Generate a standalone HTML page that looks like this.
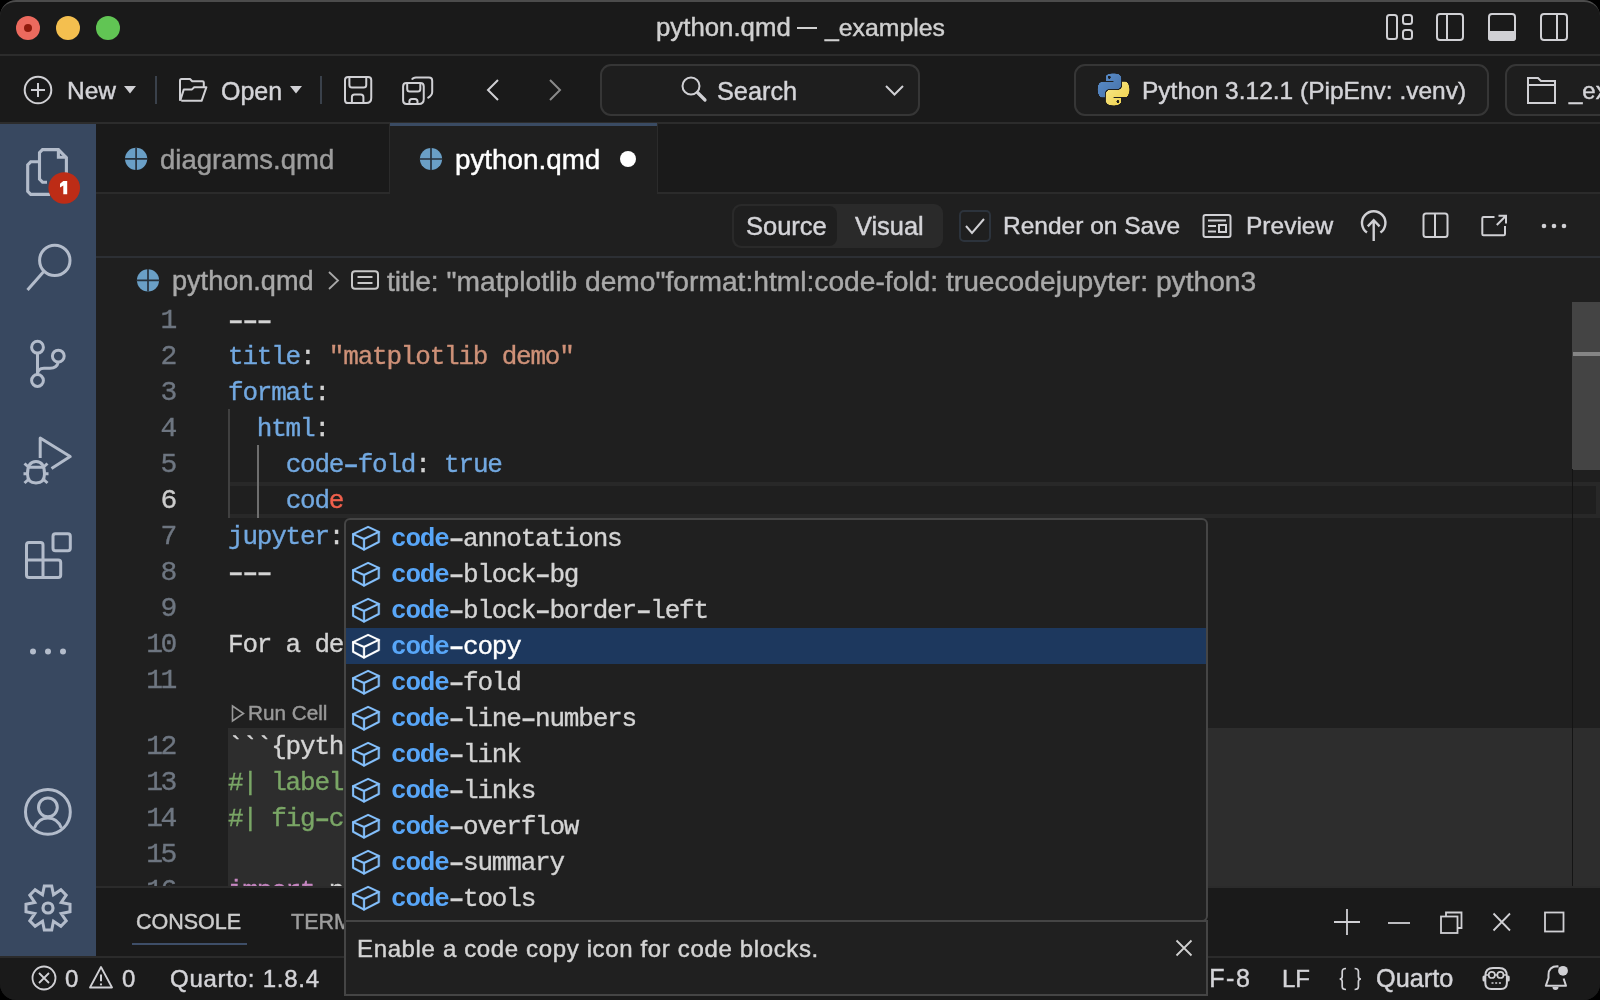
<!DOCTYPE html>
<html><head><meta charset="utf-8">
<style>
*{box-sizing:border-box;margin:0;padding:0}
html,body{width:1600px;height:1000px;overflow:hidden;background:#000}
body{font-family:"Liberation Sans",sans-serif;color:#cccccc;position:relative}
.t{-webkit-text-stroke:0.45px currentColor}
.code,.ln,.sg{-webkit-text-stroke:0.35px currentColor}
.win{position:absolute;left:0;top:0;width:1600px;height:1000px;background:#1a1a1a;border-radius:16px;overflow:hidden}
.a{position:absolute}
.t{position:absolute;white-space:pre;line-height:1}
.win *{will-change:transform}
.mono{font-family:"Liberation Mono",monospace}
svg{position:absolute;overflow:visible}
.ic{fill:none;stroke:#d0d0d4;stroke-width:2}
.ab{fill:none;stroke:#b3bccb;stroke-width:3}
.code{position:absolute;left:228px;font-family:"Liberation Mono",monospace;font-size:26px;letter-spacing:-1.2px;line-height:40px;height:36px;white-space:pre;color:#d4d4d4}
.ln{position:absolute;left:120px;width:55px;text-align:right;font-family:"Liberation Mono",monospace;font-size:28px;letter-spacing:-2.4px;line-height:40px;height:36px;white-space:pre;color:#6e7681}
.k{color:#72a8e0}.s{color:#ce9178}.cm{color:#7aa666}.p{color:#c586c0}.er{color:#f0604c}
.sg{position:absolute;left:391px;font-family:"Liberation Mono",monospace;font-size:26px;letter-spacing:-1.2px;line-height:38px;height:36px;white-space:pre;color:#d4d4d4}
.sg b{color:#58a6f8;font-weight:bold;-webkit-text-stroke:0}
em.d{font-style:normal;font-weight:bold}
</style></head>
<body>
<div class="win">
  <!-- ============ title bar ============ -->
  <div class="a" style="left:0;top:0;width:1600px;height:54px;background:#1a1a1a"></div>
  <div class="a" style="left:0;top:54px;width:1600px;height:2px;background:#2c2c2c"></div>
  <div class="a" style="left:0;top:0;width:1600px;height:1000px;border-radius:16px;border:0;border-top:2px solid #4c4c4c;z-index:50;pointer-events:none"></div>
  <div class="a" style="left:16px;top:16px;width:24px;height:24px;border-radius:50%;background:#ec6a5e"></div>
  <div class="a" style="left:24px;top:24px;width:8px;height:8px;border-radius:50%;background:#8f1a0c"></div>
  <div class="a" style="left:56px;top:16px;width:24px;height:24px;border-radius:50%;background:#f4bf4f"></div>
  <div class="a" style="left:96px;top:16px;width:24px;height:24px;border-radius:50%;background:#61c554"></div>
  <div class="t" style="left:655.5px;top:15px;font-size:25.8px;color:#d0d0d0">python.qmd</div>
  <div class="a" style="left:797px;top:27px;width:20px;height:2px;background:#d0d0d0"></div>
  <div class="t" style="left:824.5px;top:15.5px;font-size:24.8px;color:#d0d0d0">_examples</div>
  <!-- layout icons -->
  <svg style="left:0;top:0" width="1600" height="56">
    <g class="ic" stroke-width="2.2">
      <rect x="1387" y="15" width="10" height="24" rx="2.5"/>
      <rect x="1403" y="15" width="9" height="9" rx="2.5"/>
      <rect x="1403" y="30" width="9" height="9" rx="2.5"/>
      <rect x="1437" y="14" width="26" height="26" rx="3"/>
      <line x1="1447" y1="14" x2="1447" y2="40"/>
      <rect x="1489" y="14" width="26" height="26" rx="3"/>
      <rect x="1541" y="14" width="26" height="26" rx="3"/>
      <line x1="1557" y1="14" x2="1557" y2="40"/>
    </g>
    <path d="M1488 31 H1516 V38 Q1516 41 1513 41 H1491 Q1488 41 1488 38 Z" fill="#d0d0d4"/>
  </svg>

  <!-- ============ toolbar ============ -->
  <div class="a" style="left:0;top:122px;width:1600px;height:2px;background:#2c2c2c"></div>
  <div class="t" style="left:67px;top:79px;font-size:24.5px;color:#d4d4d8">New</div>
  <div class="t" style="left:221px;top:79px;font-size:25px;color:#d4d4d8">Open</div>
  <div class="a" style="left:155px;top:76px;width:2px;height:28px;background:#3a414b"></div>
  <div class="a" style="left:320px;top:76px;width:2px;height:28px;background:#3a414b"></div>
  <div class="a" style="left:600px;top:64px;width:320px;height:52px;border:2px solid #363636;border-radius:11px;background:#1e1e1e"></div>
  <div class="t" style="left:717px;top:78.5px;font-size:25.3px;color:#d4d4d8">Search</div>
  <div class="a" style="left:1074px;top:64px;width:415px;height:52px;border:2px solid #363636;border-radius:11px;background:#1e1e1e"></div>
  <div class="t" style="left:1142px;top:79px;font-size:24.5px;color:#d4d4d8">Python 3.12.1 (PipEnv: .venv)</div>
  <div class="a" style="left:1505px;top:64px;width:140px;height:52px;border:2px solid #363636;border-radius:11px;background:#1e1e1e"></div>
  <div class="t" style="left:1569px;top:79px;font-size:24px;color:#d4d4d8">_examples</div>

  <svg style="left:0;top:56px" width="1600" height="66">
    <g class="ic">
      <circle cx="38" cy="34" r="13.3"/>
      <line x1="38" y1="27" x2="38" y2="41"/><line x1="31" y1="34" x2="45" y2="34"/>
      <!-- folder open -->
      <path d="M180 44.8 V24.5 Q180 23 181.5 23 H190 L192.2 25.2 H202.4 Q203.8 25.2 203.8 26.6 V31.2" stroke-linejoin="round"/>
      <path d="M180.3 44.5 L183.8 33.4 H192 L194.2 31.2 H206.4 L201.6 44.8 H181.3" stroke-linejoin="round"/>
      <!-- save -->
      <path d="M348.2 20.9 H368.1 Q371.25 20.9 371.25 24 V42.1 Q371.25 47.1 366.25 47.1 H348.2 Q345 47.1 345 43.9 V24 Q345 20.9 348.2 20.9 Z"/>
      <path d="M349.4 20.9 V29 Q349.4 31.5 352 31.5 H363.6 Q366.25 31.5 366.25 29 V20.9"/>
      <path d="M351.9 47.1 V41 Q351.9 38.4 354.5 38.4 H360.8 Q363.4 38.4 363.4 41 V47.1"/>
      <!-- save all -->
      <path d="M411.9 23.6 Q413 21.5 416 21.5 H429 Q432.2 21.5 432.2 24.7 V36 Q432.2 39.5 427.5 42.1"/>
      <path d="M406.5 27.1 H420.3 Q423.75 27.1 423.75 30.5 V43 Q423.75 48 418.75 48 H406.5 Q403.1 48 403.1 44.6 V30.5 Q403.1 27.1 406.5 27.1 Z"/>
      <path d="M407.2 27.1 V33.1 Q407.2 35.6 409.7 35.6 H417.8 Q420.3 35.6 420.3 33.1 V27.1"/>
      <path d="M409.4 48 V45.5 Q409.4 43 411.9 43 H415 Q417.5 43 417.5 45.5 V48"/>
      <!-- nav arrows -->
      <path d="M498 24 L488 34 L498 44"/>
      <path d="M550 24 L560 34 L550 44" stroke="#8a8a8a"/>
      <!-- search magnifier -->
      <circle cx="691" cy="30" r="8.5"/>
      <line x1="697.5" y1="36.5" x2="705" y2="44" stroke-width="3.2" stroke-linecap="round"/>
      <!-- chevron -->
      <path d="M886 30 L894.5 38.5 L903 30"/>
      <!-- folder -->
      <path d="M1528 47 V22 H1538 L1541 25 H1555 V47 Z"/>
      <line x1="1528" y1="29" x2="1555" y2="29"/>
    </g>
    <path d="M124 30 H136 L130 37.5 Z M290 30 H302 L296 37.5 Z" fill="#d0d0d4"/>
    <defs><linearGradient id="pyb" x1="0" y1="0" x2="1" y2="1"><stop offset="0" stop-color="#5c8fcc"/><stop offset="1" stop-color="#4571a8"/></linearGradient><linearGradient id="pyy" x1="0" y1="0" x2="1" y2="1"><stop offset="0" stop-color="#f8e98f"/><stop offset="1" stop-color="#efcf45"/></linearGradient></defs>
    <g transform="translate(1097.5,17.5) scale(0.29)">
      <path fill="url(#pyb)" d="M54.9,0.1c-4.6,0-9,0.4-12.8,1.1C30.8,3.2,28.8,7.3,28.8,15v10.1h26.3v3.4H28.8H19c-7.6,0-14.3,4.6-16.4,13.3c-2.4,10-2.5,16.2,0,26.7c1.9,7.8,6.3,13.3,13.9,13.3h9v-12c0-8.7,7.5-16.3,16.4-16.3h26.2c7.3,0,13.1-6,13.1-13.3V15c0-7.1-6-12.4-13.1-13.7C63.5,0.4,59,0.1,54.9,0.1z M40.7,8.2c2.7,0,4.9,2.2,4.9,5c0,2.7-2.2,4.9-4.9,4.9c-2.7,0-4.9-2.2-4.9-4.9C35.8,10.4,38,8.2,40.7,8.2z"/>
      <path fill="url(#pyy)" d="M85,28.5v11.7c0,9-7.7,16.6-16.4,16.6H42.4c-7.2,0-13.1,6.1-13.1,13.3v25c0,7.1,6.2,11.3,13.1,13.3c8.3,2.4,16.3,2.9,26.2,0c6.6-1.9,13.1-5.8,13.1-13.3V85.1H55.4v-3.3h26.2h13.1c7.6,0,10.5-5.3,13.1-13.3c2.7-8.2,2.6-16.1,0-26.7c-1.9-7.6-5.5-13.3-13.1-13.3H85z M70.3,91.8c2.7,0,4.9,2.2,4.9,4.9c0,2.7-2.2,5-4.9,5c-2.7,0-4.9-2.2-4.9-5C65.4,94,67.6,91.8,70.3,91.8z"/>
    </g>
  </svg>
  <!-- ============ activity bar ============ -->
  <div class="a" style="left:0;top:124px;width:96px;height:832px;background:#384860"></div>
  <svg style="left:0;top:0" width="96" height="960">
    <g class="ab">
      <!-- files -->
      <path style="stroke-width:3.1" d="M47 182.2 H42.5 L39.5 179.2 V152.6 L42.5 149.6 H58.4 L66.4 157.6 V175"/>
      <path style="stroke-width:3.1" d="M58.4 149.6 V157.3 H66.4"/>
      <path style="stroke-width:3.1" d="M39.5 161.8 H30.7 L27.7 164.8 V191.4 L30.7 194.4 H50"/>
      <!-- search -->
      <circle cx="54.8" cy="260.4" r="15.2"/>
      <line x1="44" y1="271.2" x2="27.5" y2="290"/>
      <!-- source control -->
      <circle cx="37.5" cy="347.2" r="5.9"/>
      <circle cx="37.5" cy="380.5" r="5.9"/>
      <circle cx="58.3" cy="356.1" r="5.9"/>
      <line x1="37.5" y1="353" x2="37.5" y2="374.6"/>
      <path d="M58.3 362 Q57 368.3 50 368.3 H44 Q37.5 368.3 37.5 374.6"/>
      <!-- run & debug -->
      <path d="M40.2 458 V438 L70.2 456.6 L51.5 468.4" stroke-linejoin="round"/>
      <path d="M27.5 474 Q27.5 461.5 36 461.5 Q44.5 461.5 44.5 474 Q44.5 483 36 483 Q27.5 483 27.5 474 Z"/>
      <path d="M28 467.2 H44 M23.5 473.8 H27.5 M44.5 473.8 H48.5 M24.5 463.5 L29 467.5 M47.5 463.5 L43 467.5 M24.5 483 L29 479 M47.5 483 L43 479"/>
      <!-- extensions -->
      <rect x="53" y="533.8" width="17.3" height="17" rx="2.5"/>
      <path d="M43 560 V545 Q43 542.5 40.5 542.5 H29 Q26.5 542.5 26.5 545 V575 Q26.5 577.5 29 577.5 H58.2 Q60.7 577.5 60.7 575 V562.5 Q60.7 560 58.2 560 H26.5 M43 560 V577.5"/>
      <!-- account -->
      <circle cx="47.9" cy="811.9" r="22.4"/>
      <circle cx="47.9" cy="807.3" r="9.4"/>
      <path d="M34.4 828 Q38.5 818 47.9 818 Q57.3 818 61.4 828"/>
      <!-- gear -->
      <circle cx="48" cy="908" r="5" style="stroke-width:3.2"/>
    </g>
    <path class="ab" style="stroke-width:3;stroke-linejoin:miter" d="M44.3 886.0 L51.7 886.0 L53.5 894.8 L60.9 889.8 L66.2 895.1 L61.2 902.5 L70.0 904.3 L70.0 911.7 L61.2 913.5 L66.2 920.9 L60.9 926.2 L53.5 921.2 L51.7 930.0 L44.3 930.0 L42.5 921.2 L35.1 926.2 L29.8 920.9 L34.8 913.5 L26.0 911.7 L26.0 904.3 L34.8 902.5 L29.8 895.1 L35.1 889.8 L42.5 894.8 Z"/>
    <circle cx="33" cy="651.6" r="3" fill="#b3bccb"/>
    <circle cx="48" cy="651.6" r="3" fill="#b3bccb"/>
    <circle cx="63" cy="651.6" r="3" fill="#b3bccb"/>
    <circle cx="64.2" cy="188" r="15.8" fill="#bd2c16"/>
    <path d="M63.3 181 H67.2 V194.2 H63.3 V185.6 L60 187.6 V183.8 Z" fill="#fff"/>
  </svg>
  
  <!-- ============ tab bar ============ -->
  <div class="a" style="left:96px;top:124px;width:1504px;height:68px;background:#1a1a1a"></div>
  <div class="a" style="left:96px;top:192px;width:1504px;height:2px;background:#2b2b2b"></div>
  <div class="a" style="left:389px;top:124px;width:1px;height:68px;background:#2b2b2b"></div>
  <div class="a" style="left:390px;top:124px;width:267px;height:70px;background:#1f1f1f"></div>
  <div class="a" style="left:390px;top:123px;width:267px;height:3px;background:#3a4b63"></div>
  <div class="a" style="left:657px;top:124px;width:1px;height:68px;background:#2b2b2b"></div>
  <div class="t" style="left:160px;top:146px;font-size:27.5px;color:#9d9d9d">diagrams.qmd</div>
  <div class="t" style="left:455px;top:146px;font-size:27.8px;color:#ffffff">python.qmd</div>
  <div class="a" style="left:620px;top:151px;width:16px;height:16px;border-radius:50%;background:#fff"></div>

  <!-- ============ editor ============ -->
  <div class="a" style="left:96px;top:194px;width:1504px;height:692px;background:#1f1f1f"></div>
  <div class="a" style="left:96px;top:256px;width:1504px;height:2px;background:#2c2f34"></div>
  <!-- editor actions -->
  <div class="a" style="left:732px;top:204px;width:211px;height:44px;border-radius:9px;background:#2a2a2a"></div>
  <div class="a" style="left:734px;top:206px;width:103px;height:40px;border-radius:8px;background:#1f1f1f"></div>
  <div class="t" style="left:746px;top:214px;font-size:25.5px;color:#d4d4d8">Source</div>
  <div class="t" style="left:855px;top:214px;font-size:25.4px;color:#d4d4d8">Visual</div>
  <div class="a" style="left:959px;top:210px;width:32px;height:32px;border-radius:5px;border:2px solid #2c333c;background:#1f1f1f"></div>
  <div class="t" style="left:1003px;top:214px;font-size:24.5px;color:#d4d4d8">Render on Save</div>
  <div class="t" style="left:1246px;top:214px;font-size:24.5px;color:#d4d4d8">Preview</div>
  <svg style="left:0;top:0" width="1600" height="260">
    <g class="ic">
      <path d="M966 226 L972 233 L984 219"/>
      <!-- preview -->
      <rect x="1203.5" y="215" width="27" height="22" rx="2"/>
      <line x1="1208" y1="220.5" x2="1226" y2="220.5"/>
      <line x1="1208" y1="226" x2="1216" y2="226"/>
      <line x1="1208" y1="231.5" x2="1216" y2="231.5"/>
      <rect x="1219" y="225" width="7" height="7"/>
      <!-- publish -->
      <path d="M1367 232.5 A11.7 11.7 0 1 1 1380.4 232.5" stroke-width="2.4"/>
      <path d="M1373.7 241 V220 M1367.8 226.3 L1373.7 220.2 L1379.6 226.3" stroke-width="2.4"/>
      <!-- split -->
      <rect x="1423.5" y="213.5" width="24" height="23.5" rx="2.5"/>
      <line x1="1435" y1="213.5" x2="1435" y2="237"/>
      <!-- open external -->
      <path d="M1494.5 217 H1483.5 Q1482.3 217 1482.3 218.2 V234 Q1482.3 235.2 1483.5 235.2 H1503.8 Q1505 235.2 1505 234 V226"/>
      <path d="M1496.8 225 L1506 215.8 M1498.5 215.8 H1506 V223.5"/>
    </g>
    <circle cx="1544" cy="226" r="2.3" fill="#d0d0d4"/>
    <circle cx="1554" cy="226" r="2.3" fill="#d0d0d4"/>
    <circle cx="1564" cy="226" r="2.3" fill="#d0d0d4"/>
  </svg>
  <!-- breadcrumbs -->
  <div class="t" style="left:172px;top:267px;font-size:27.1px;color:#a9a9a9">python.qmd</div>
  <div class="t" style="left:387px;top:267px;font-size:28.2px;color:#a9a9a9">title: "matplotlib demo"format:html:code-fold: truecodejupyter: python3</div>

  <svg style="left:0;top:0" width="700" height="300">
    <g id="qi">
      <circle cx="136.1" cy="158.8" r="11.1" fill="#6a9fc6"/>
      <path d="M136.1 147.5 V170 M124.8 158.8 H147.4" stroke="#27313b" stroke-width="1.7"/>
    </g>
    <g>
      <circle cx="431" cy="159" r="11.1" fill="#6a9fc6"/>
      <path d="M431 147.7 V170.3 M419.7 159 H442.3" stroke="#27313b" stroke-width="1.7"/>
    </g>
    <g>
      <circle cx="148" cy="280.3" r="11.1" fill="#6a9fc6"/>
      <path d="M148 269 V291.6 M136.7 280.3 H159.3" stroke="#27313b" stroke-width="1.7"/>
    </g>
    <path d="M329 272 L338 280.5 L329 289" fill="none" stroke="#a8a8a8" stroke-width="1.8"/>
    <rect x="352" y="271.3" width="26" height="17.5" rx="3" fill="none" stroke="#c8c8c8" stroke-width="2"/>
    <line x1="357.5" y1="277" x2="372.5" y2="277" stroke="#c8c8c8" stroke-width="2"/>
    <line x1="357.5" y1="283" x2="372.5" y2="283" stroke="#c8c8c8" stroke-width="2"/>
  </svg>
  <!-- current line -->
  <div class="a" style="left:229px;top:482px;width:1371px;height:36px;border:4px solid #282828;border-left:0"></div>
  <!-- cell background -->
  <div class="a" style="left:228px;top:728px;width:1372px;height:158px;background:#2d2d2d"></div>
  <!-- indent guides -->
  <div class="a" style="left:228px;top:409px;width:2px;height:109px;background:#404040"></div>
  <div class="a" style="left:257px;top:445px;width:2px;height:73px;background:#6e6e6e"></div>

  <!-- scrollbar / overview -->
  <div class="a" style="left:1572px;top:302px;width:28px;height:168px;background:#444444"></div>
  <div class="a" style="left:1573px;top:352px;width:27px;height:4px;background:#858585"></div>
  <div class="a" style="left:1572px;top:469px;width:1px;height:417px;background:#141414"></div>

  <!-- line numbers -->
  <div class="ln" style="top:301px">1</div>
  <div class="ln" style="top:337px">2</div>
  <div class="ln" style="top:373px">3</div>
  <div class="ln" style="top:409px">4</div>
  <div class="ln" style="top:445px">5</div>
  <div class="ln" style="top:481px;color:#cccccc">6</div>
  <div class="ln" style="top:517px">7</div>
  <div class="ln" style="top:553px">8</div>
  <div class="ln" style="top:589px">9</div>
  <div class="ln" style="top:625px">10</div>
  <div class="ln" style="top:661px">11</div>
  <div class="ln" style="top:727px">12</div>
  <div class="ln" style="top:763px">13</div>
  <div class="ln" style="top:799px">14</div>
  <div class="ln" style="top:835px">15</div>
  <div class="ln" style="top:871px">16</div>

  <!-- code -->
  <div class="code" style="top:301px"><em class="d">–</em><em class="d">–</em><em class="d">–</em></div>
  <div class="code" style="top:337px"><span class="k">title</span>: <span class="s">"matplotlib demo"</span></div>
  <div class="code" style="top:373px"><span class="k">format</span>:</div>
  <div class="code" style="top:409px">  <span class="k">html</span>:</div>
  <div class="code" style="top:445px">    <span class="k">code<em class="d">–</em>fold</span>: <span class="k">true</span></div>
  <div class="code" style="top:481px">    <span class="k">cod</span><span class="er">e</span></div>
  <div class="code" style="top:517px"><span class="k">jupyter</span>: python3</div>
  <div class="code" style="top:553px"><em class="d">–</em><em class="d">–</em><em class="d">–</em></div>
  <div class="code" style="top:625px">For a demonstration of a line plot on a polar axis, see @fig<em class="d">–</em>polar.</div>
  <div class="code" style="top:727px">```{python}</div>
  <div class="code" style="top:763px"><span class="cm">#| label: fig<em class="d">–</em>polar</span></div>
  <div class="code" style="top:799px"><span class="cm">#| fig<em class="d">–</em>cap: "A line plot on a polar axis"</span></div>
  <div class="code" style="top:871px"><span class="p">import</span> numpy <span class="p">as</span> np</div>
  <!-- codelens -->
  <svg style="left:0;top:0" width="300" height="760">
    <path d="M232.5 706 L243.5 713.5 L232.5 721 Z" fill="none" stroke="#999" stroke-width="1.6"/>
  </svg>
  <div class="t" style="left:248px;top:702.5px;font-size:20.7px;color:#999999">Run Cell</div>

  <!-- ============ panel ============ -->
  <div class="a" style="left:96px;top:886px;width:1504px;height:2px;background:#2b2b2b"></div>
  <div class="a" style="left:96px;top:888px;width:1504px;height:68px;background:#1a1a1a"></div>
  <div class="t" style="left:136px;top:912px;font-size:21.5px;color:#cccccc">CONSOLE</div>
  <div class="a" style="left:132px;top:943px;width:115px;height:2px;background:#3e4e68"></div>
  <div class="t" style="left:291px;top:912px;font-size:21.5px;color:#9d9d9d">TERMINAL</div>

  <!-- ============ status bar ============ -->
  <div class="a" style="left:0;top:956px;width:1600px;height:2px;background:#2b2b2b"></div>
  <div class="a" style="left:0;top:958px;width:1600px;height:42px;background:#1a1a1a"></div>
  <div class="t" style="left:170px;top:967px;font-size:24px;letter-spacing:0.75px;color:#d4d4d8">Quarto: 1.8.4</div>
  <div class="t" style="left:65px;top:967px;font-size:24px;color:#d4d4d8">0</div>
  <div class="t" style="left:122px;top:967px;font-size:24px;color:#d4d4d8">0</div>
  <div class="t" style="left:1173px;top:966px;font-size:25px;letter-spacing:1.5px;color:#d4d4d8">UTF-8</div>
  <div class="t" style="left:1282px;top:967px;font-size:24px;color:#d4d4d8">LF</div>
  <div class="t" style="left:1376px;top:966px;font-size:25.3px;color:#d4d4d8">Quarto</div>
  <svg style="left:0;top:0" width="1600" height="1000">
    <g class="ic">
      <circle cx="44" cy="978" r="11.5" stroke-width="1.8"/>
      <path d="M39 973 L49 983 M49 973 L39 983" stroke-width="1.8"/>
      <path d="M101 967 L112 987.5 H90 Z" stroke-width="1.8" stroke-linejoin="round"/>
      <line x1="101" y1="974.5" x2="101" y2="981.3" stroke-width="2"/>
      <circle cx="101" cy="984.4" r="1.1" fill="#d0d0d4" stroke="none"/>
      <path d="M1346 968.5 Q1342.2 968.5 1342.2 971.5 V976.5 Q1342.2 979 1339.6 979 Q1342.2 979 1342.2 981.5 V986.5 Q1342.2 989.5 1346 989.5 M1354.6 968.5 Q1358.4 968.5 1358.4 971.5 V976.5 Q1358.4 979 1361 979 Q1358.4 979 1358.4 981.5 V986.5 Q1358.4 989.5 1354.6 989.5" stroke-width="1.7"/>
      <!-- copilot -->
      <path d="M1485.3 976 Q1485.3 968 1493 968 H1499.2 Q1506.9 968 1506.9 976 V983 Q1506.9 989 1501 989 H1491.2 Q1485.3 989 1485.3 983 Z" stroke-width="2"/>
      <circle cx="1491.8" cy="974.9" r="3.1" stroke-width="1.7"/>
      <circle cx="1500.4" cy="974.9" r="3.1" stroke-width="1.7"/>
      <path d="M1494.9 974.9 H1497.3 M1485.3 974.9 H1488.7 M1503.5 974.9 H1506.9" stroke-width="1.5"/>
      <!-- bell -->
      <path d="M1563.6 978.5 L1566 985.8 H1545.8 L1548.5 978 V975 Q1548.5 966.3 1557.5 966.3 L1558.5 966.4" stroke-linejoin="round" stroke-width="2"/>
      <!-- panel actions -->
      <path d="M1347 909 V935 M1334 922 H1360" stroke-width="1.8"/>
      <path d="M1388 923 H1410" stroke-width="1.8"/>
      <rect x="1441" y="916.5" width="16.5" height="16.5" stroke-width="1.8"/>
      <path d="M1446 916.5 V912.5 H1461.5 V928 H1457.5" stroke-width="1.8"/>
      <path d="M1493.5 913.5 L1510 930.5 M1510 913.5 L1493.5 930.5" stroke-width="1.8"/>
      <rect x="1545" y="912.5" width="18.5" height="19" stroke-width="1.8"/>
    </g>
    <circle cx="1563" cy="970.8" r="4.9" fill="#d0d0d4"/>
    <path d="M1552.5 987 A3 3 0 0 0 1558.5 987 Z" fill="#d0d0d4"/>
    <rect x="1482.5" y="975.5" width="3" height="6" rx="1.5" fill="#d0d0d4"/><rect x="1506.7" y="975.5" width="3" height="6" rx="1.5" fill="#d0d0d4"/>
    <path d="M1491.5 983 h2 M1495.2 983 h2 M1498.9 983 h2" stroke="#d0d0d4" stroke-width="1.6"/>
  </svg>

  <!-- ============ suggest widget ============ -->
  <div class="a" style="left:344px;top:518px;width:864px;height:404px;border:2px solid #454545;border-radius:6px 6px 6px 0;background:#202020"></div>
  <div class="a" style="left:346px;top:628px;width:860px;height:36px;background:#1d385e"></div>
  <div class="sg" style="top:520px"><b>code</b><em class="d">–</em>annotations</div>
  <div class="sg" style="top:556px"><b>code</b><em class="d">–</em>block<em class="d">–</em>bg</div>
  <div class="sg" style="top:592px"><b>code</b><em class="d">–</em>block<em class="d">–</em>border<em class="d">–</em>left</div>
  <div class="sg" style="top:628px;color:#ffffff"><b>code</b><em class="d">–</em>copy</div>
  <div class="sg" style="top:664px"><b>code</b><em class="d">–</em>fold</div>
  <div class="sg" style="top:700px"><b>code</b><em class="d">–</em>line<em class="d">–</em>numbers</div>
  <div class="sg" style="top:736px"><b>code</b><em class="d">–</em>link</div>
  <div class="sg" style="top:772px"><b>code</b><em class="d">–</em>links</div>
  <div class="sg" style="top:808px"><b>code</b><em class="d">–</em>overflow</div>
  <div class="sg" style="top:844px"><b>code</b><em class="d">–</em>summary</div>
  <div class="sg" style="top:880px"><b>code</b><em class="d">–</em>tools</div>
  <svg style="left:0;top:0" width="1600" height="1000">
    <defs>
      <g id="cube" fill="none" stroke-width="2.1" stroke-linejoin="round" stroke-linecap="round">
        <path d="M15 -11.1 L25.7 -6.1 V4 L10.9 11.6 L0 5.8 V-3.9 Z"/>
        <path d="M0 -3.9 L10.9 1 L25.7 -6.1 M10.9 1 V11.6"/>
      </g>
    </defs>
    <g stroke="#85c1fd">
      <use href="#cube" x="353.1" y="538"/>
      <use href="#cube" x="353.1" y="574"/>
      <use href="#cube" x="353.1" y="610"/>
      <use href="#cube" x="353.1" y="682"/>
      <use href="#cube" x="353.1" y="718"/>
      <use href="#cube" x="353.1" y="754"/>
      <use href="#cube" x="353.1" y="790"/>
      <use href="#cube" x="353.1" y="826"/>
      <use href="#cube" x="353.1" y="862"/>
      <use href="#cube" x="353.1" y="898"/>
    </g>
    <use href="#cube" x="353.1" y="646" stroke="#ffffff"/>
  </svg>
  <!-- details -->
  <div class="a" style="left:344px;top:920px;width:864px;height:76px;border:2px solid #454545;background:#202020"></div>
  <div class="t" style="left:356.5px;top:936.5px;font-size:24px;letter-spacing:0.64px;color:#d4d4d4">Enable a code copy icon for code blocks.</div>
  <svg style="left:0;top:0" width="1600" height="1000">
    <path d="M1176.5 940.5 L1191.5 955.5 M1191.5 940.5 L1176.5 955.5" stroke="#d0d0d0" stroke-width="1.8"/>
  </svg>
</div>
</body></html>
